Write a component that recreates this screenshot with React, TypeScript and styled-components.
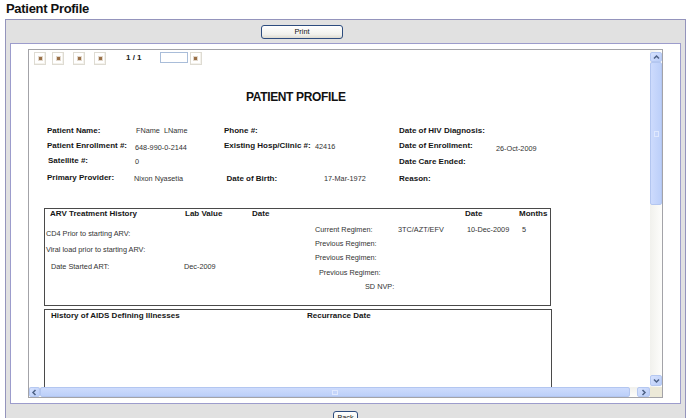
import React from "react";
import styled, { createGlobalStyle } from "styled-components";

const Global = createGlobalStyle`
  html, body { margin: 0; padding: 0; background: #fff; overflow: hidden; }
  body { font-family: "Liberation Sans", Arial, sans-serif; }
`;

const Page = styled.div`
  width: 690px;
  height: 418px;
  overflow: hidden;
`;

const Title = styled.h1`
  margin: 0;
  height: 19px;
  padding-left: 6px;
  font-size: 13px;
  font-weight: 700;
  letter-spacing: -0.3px;
  line-height: 18px;
  color: #111;
`;

const Panel = styled.div`
  margin: 0 4px 0 5px;
  height: 399px;
  box-sizing: border-box;
  border: 1px solid #9494bc;
  border-bottom: none;
  background: #e1e1e1;
`;

const ButtonRow = styled.div<{ $top: number; $left: number }>`
  display: flex;
  padding: ${(p) => p.$top}px 0 0 ${(p) => p.$left}px;
`;

const XpButton = styled.button<{ $w: number }>`
  width: ${(p) => p.$w}px;
  height: 14px;
  box-sizing: border-box;
  padding: 0;
  border: 1px solid #2d4c7e;
  border-radius: 3px;
  background: linear-gradient(#ffffff, #f1f1ec 70%, #dedbd0);
  font-family: "Liberation Sans", Arial, sans-serif;
  font-size: 7.3px;
  line-height: 12px;
  color: #111;
`;

const Frame = styled.div`
  margin: 4px 4px 0 4px;
  border: 1px solid #9c9ccc;
  background: #fff;
  padding: 5px 17px;
`;

const Viewer = styled.div`
  height: 349px;
  box-sizing: border-box;
  border: 1px solid #a3a3a8;
  display: grid;
  grid-template-columns: 1fr 12px;
  grid-template-rows: 1fr 10px;
`;

const Content = styled.div`
  overflow: hidden;
  min-width: 0;
  min-height: 0;
`;

const Toolbar = styled.div`
  display: flex;
  align-items: flex-start;
  padding-top: 2px;
  height: 13px;
`;

const ToolIcon = styled.div<{ $ml: number }>`
  margin-left: ${(p) => p.$ml}px;
  width: 12px;
  height: 13px;
  box-sizing: border-box;
  border: 1px solid #dedbd2;
  box-shadow: inset -1px -1px 0 #f4f2ec;
  display: flex;
  align-items: center;
  justify-content: center;
  &::after {
    content: "";
    width: 3px;
    height: 3px;
    background: #9a7048;
    box-shadow: 0 0 0 1px #e2d8cc;
  }
`;

const PageText = styled.span`
  margin-left: 20px;
  font-size: 8px;
  font-weight: 700;
  line-height: 12px;
  color: #222;
  white-space: pre;
`;

const PageInput = styled.div`
  margin-left: 18px;
  width: 28px;
  height: 11px;
  box-sizing: border-box;
  border: 1px solid #a9bdd9;
  background: #fff;
`;

const Report = styled.div`
  padding-left: 15px;
`;

const Heading = styled.div`
  margin: 25px 0 0 202px;
  font-size: 12px;
  font-weight: 700;
  letter-spacing: -0.35px;
  line-height: 14px;
  color: #111;
`;

const FieldGrid = styled.div`
  margin: 19px 0 0 3px;
  display: grid;
  grid-template-columns: 88px 89px 91px 84px 97px 1fr;
  grid-template-rows: 15px 15px 16px 17px;
`;

const Cell = styled.div<{ $b?: boolean; $dx: number; $dy: number; $lh: number }>`
  line-height: ${(p) => p.$lh}px;
  padding-top: ${(p) => p.$dy}px;
  margin-left: ${(p) => p.$dx}px;
  font-size: ${(p) => (p.$b ? 8 : 7.3)}px;
  font-weight: ${(p) => (p.$b ? 700 : 400)};
  color: ${(p) => (p.$b ? "#161616" : "#333")};
  white-space: pre;
`;

const Box = styled.div<{ $w: number; $h: number; $mt: number }>`
  margin-top: ${(p) => p.$mt}px;
  width: ${(p) => p.$w}px;
  height: ${(p) => p.$h}px;
  box-sizing: border-box;
  border: 1px solid #4a4a4a;
`;

const BoxHead = styled.div<{ $lh: number; $pl: number }>`
  display: flex;
  padding-left: ${(p) => p.$pl}px;
  line-height: ${(p) => p.$lh}px;
  height: ${(p) => p.$lh}px;
`;

const HeadCell = styled.div<{ $w?: number }>`
  ${(p) => (p.$w ? `width: ${p.$w}px;` : "")}
  flex: none;
  font-size: 8px;
  font-weight: 700;
  color: #161616;
  white-space: pre;
`;

const BoxBody = styled.div`
  display: flex;
`;

const LabGrid = styled.div`
  width: 270px;
  padding-top: 8px;
  display: grid;
  grid-template-columns: 139px 1fr;
  grid-template-rows: 16px 16px 18px;
`;

const RegimenGrid = styled.div`
  padding-top: 5px;
  display: grid;
  grid-template-columns: 83px 69px 55px 1fr;
  grid-auto-rows: 14.2px;
`;

const VBar = styled.div`
  display: flex;
  flex-direction: column;
  padding: 2px 0 1px;
  background: linear-gradient(to right, #f1f1ed, #fdfdfb);
`;

const HBar = styled.div`
  display: flex;
  background: linear-gradient(#f1f1ed, #fdfdfb);
`;

const ArrowBtn = styled.div<{ $w?: number; $h?: number }>`
  flex: none;
  ${(p) => (p.$w ? `width: ${p.$w}px;` : "")}
  ${(p) => (p.$h ? `height: ${p.$h}px;` : "")}
  box-sizing: border-box;
  border: 1px solid #b5c8f1;
  border-radius: 2px;
  background: linear-gradient(135deg, #d6e2fe, #bacdf8);
  display: flex;
  align-items: center;
  justify-content: center;
`;

const Thumb = styled.div<{ $w?: number; $h?: number; $vertical?: boolean }>`
  flex: none;
  ${(p) => (p.$w ? `width: ${p.$w}px;` : "")}
  ${(p) => (p.$h ? `height: ${p.$h}px;` : "")}
  box-sizing: border-box;
  border: 1px solid #b3c6f0;
  border-radius: 2px;
  background: ${(p) =>
    p.$vertical
      ? "linear-gradient(to right, #cddbfd, #bccff9)"
      : "linear-gradient(#cddbfd, #bccff9)"};
  display: flex;
  align-items: center;
  justify-content: center;
  &::after {
    content: "";
    width: ${(p) => (p.$vertical ? 5 : 6)}px;
    height: ${(p) => (p.$vertical ? 6 : 5)}px;
    box-sizing: border-box;
    border: 1px solid #dfe8fe;
    background: #c5d5fb;
  }
`;

const Track = styled.div`
  flex: 1;
`;

const Corner = styled.div`
  background: #ece9d8;
`;

type C = { t: string; b?: boolean; dx?: number; dy?: number };

const fieldRows: { h: number; cells: C[] }[] = [
  {
    h: 15,
    cells: [
      { t: "Patient Name:", b: true },
      { t: "FName  LName", dx: 1 },
      { t: "Phone #:", b: true },
      { t: "" },
      { t: "Date of HIV Diagnosis:", b: true },
      { t: "" },
    ],
  },
  {
    h: 15,
    cells: [
      { t: "Patient Enrollment #:", b: true },
      { t: "648-990-0-2144", dy: 1.5 },
      { t: "Existing Hosp/Clinic #:", b: true },
      { t: "42416", dy: 0.5 },
      { t: "Date of Enrollment:", b: true },
      { t: "26-Oct-2009", dy: 3.4 },
    ],
  },
  {
    h: 16,
    cells: [
      { t: "Satellite #:", b: true, dx: 1 },
      { t: "0", dy: 1 },
      { t: "" },
      { t: "" },
      { t: "Date Care Ended:", b: true, dy: 0.7 },
      { t: "" },
    ],
  },
  {
    h: 17,
    cells: [
      { t: "Primary Provider:", b: true },
      { t: "Nixon Nyasetia", dx: -1, dy: 1.3 },
      { t: "Date of Birth:", b: true, dx: 2.5, dy: 0.5 },
      { t: "17-Mar-1972", dx: 9, dy: 1 },
      { t: "Reason:", b: true, dy: 0.5 },
      { t: "" },
    ],
  },
];

const labRows: { label: string; value: string; h: number; dx: number }[] = [
  { label: "CD4 Prior to starting ARV:", value: "", h: 16, dx: 1 },
  { label: "Viral load prior to starting ARV:", value: "", h: 16, dx: 1 },
  { label: "Date Started ART:", value: "Dec-2009", h: 18, dx: 6 },
];

const regimenRows: { label: string; reg: string; date: string; months: string; dx: number }[] = [
  { label: "Current Regimen:", reg: "3TC/AZT/EFV", date: "10-Dec-2009", months: "5", dx: 0 },
  { label: "Previous Regimen:", reg: "", date: "", months: "", dx: 0 },
  { label: "Previous Regimen:", reg: "", date: "", months: "", dx: 0 },
  { label: "Previous Regimen:", reg: "", date: "", months: "", dx: 4 },
  { label: "SD NVP:", reg: "", date: "", months: "", dx: 50 },
];

const Chevron = ({ dir }: { dir: "up" | "down" | "left" | "right" }) => {
  const paths: Record<string, string> = {
    up: "M1 4.5 L3.5 2 L6 4.5",
    down: "M1 2.5 L3.5 5 L6 2.5",
    left: "M4.5 1 L2 3.5 L4.5 6",
    right: "M2.5 1 L5 3.5 L2.5 6",
  };
  return (
    <svg width="7" height="7" viewBox="0 0 7 7">
      <path d={paths[dir]} fill="none" stroke="#4d6185" strokeWidth="1.5" />
    </svg>
  );
};

export default function App() {
  return (
    <Page>
      <Global />
      <Title>Patient Profile</Title>
      <Panel>
        <ButtonRow $top={5} $left={255}>
          <XpButton $w={82}>Print</XpButton>
        </ButtonRow>
        <Frame>
          <Viewer>
            <Content>
              <Toolbar>
                <ToolIcon $ml={5} />
                <ToolIcon $ml={6} />
                <ToolIcon $ml={9} />
                <ToolIcon $ml={9} />
                <PageText>1 / 1</PageText>
                <PageInput />
                <ToolIcon $ml={2} />
              </Toolbar>
              <Report>
                <Heading>PATIENT PROFILE</Heading>
                <FieldGrid>
                  {fieldRows.map((row, ri) =>
                    row.cells.map((c, ci) => (
                      <Cell
                        key={`${ri}-${ci}`}
                        $b={c.b}
                        $dx={c.dx ?? 0}
                        $dy={c.dy ?? 0}
                        $lh={row.h}
                      >
                        {c.t}
                      </Cell>
                    ))
                  )}
                </FieldGrid>
                <Box $w={507} $h={98} $mt={22}>
                  <BoxHead $lh={9} $pl={5}>
                    <HeadCell $w={135}>ARV Treatment History</HeadCell>
                    <HeadCell $w={67}>Lab Value</HeadCell>
                    <HeadCell $w={213}>Date</HeadCell>
                    <HeadCell $w={54}>Date</HeadCell>
                    <HeadCell>Months</HeadCell>
                  </BoxHead>
                  <BoxBody>
                    <LabGrid>
                      {labRows.map((r, i) => (
                        <React.Fragment key={i}>
                          <Cell $dx={r.dx} $dy={0} $lh={r.h}>
                            {r.label}
                          </Cell>
                          <Cell $dx={0} $dy={0} $lh={r.h}>
                            {r.value}
                          </Cell>
                        </React.Fragment>
                      ))}
                    </LabGrid>
                    <RegimenGrid>
                      {regimenRows.map((r, i) => (
                        <React.Fragment key={i}>
                          <Cell $dx={r.dx} $dy={0} $lh={14.2}>
                            {r.label}
                          </Cell>
                          <Cell $dx={0} $dy={0} $lh={14.2}>
                            {r.reg}
                          </Cell>
                          <Cell $dx={0} $dy={0} $lh={14.2}>
                            {r.date}
                          </Cell>
                          <Cell $dx={0} $dy={0} $lh={14.2}>
                            {r.months}
                          </Cell>
                        </React.Fragment>
                      ))}
                    </RegimenGrid>
                  </BoxBody>
                </Box>
                <Box $w={508} $h={110} $mt={3}>
                  <BoxHead $lh={11} $pl={6}>
                    <HeadCell $w={256}>History of AIDS Defining Illnesses</HeadCell>
                    <HeadCell>Recurrance Date</HeadCell>
                  </BoxHead>
                </Box>
              </Report>
            </Content>
            <VBar>
              <ArrowBtn $h={10}>
                <Chevron dir="up" />
              </ArrowBtn>
              <Thumb $h={143} $vertical />
              <Track />
              <ArrowBtn $h={11}>
                <Chevron dir="down" />
              </ArrowBtn>
            </VBar>
            <HBar>
              <ArrowBtn $w={11}>
                <Chevron dir="left" />
              </ArrowBtn>
              <Thumb $w={590} />
              <Track />
              <ArrowBtn $w={13}>
                <Chevron dir="right" />
              </ArrowBtn>
            </HBar>
            <Corner />
          </Viewer>
        </Frame>
        <ButtonRow $top={7} $left={327}>
          <XpButton $w={25}>Back</XpButton>
        </ButtonRow>
      </Panel>
    </Page>
  );
}
